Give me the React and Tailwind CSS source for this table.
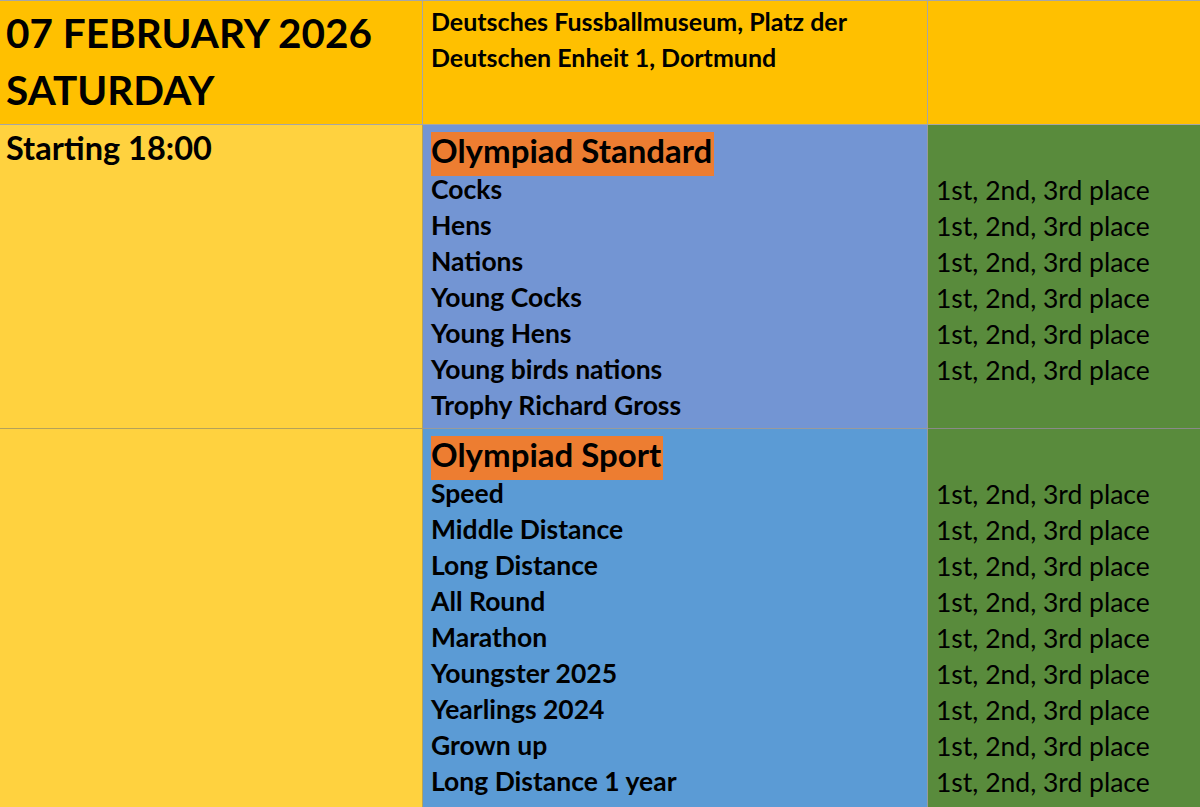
const standard = [
  "Cocks",
  "Hens",
  "Nations",
  "Young Cocks",
  "Young Hens",
  "Young birds nations",
  "Trophy Richard Gross",
];

const sport = [
  "Speed",
  "Middle Distance",
  "Long Distance",
  "All Round",
  "Marathon",
  "Youngster 2025",
  "Yearlings 2024",
  "Grown up",
  "Long Distance 1 year",
];

const Section = ({ label, title, items, prizes, blue, last }) => (
  <>
    <div
      className={`bg-[#ffd23f] border-r border-[#b4a25a] pl-[6px] pt-[3px] text-[32.5px] font-bold leading-[40px] text-black ${last ? "" : "border-b"}`}
    >
      {label}
    </div>
    <div
      className={`${blue} border-r border-[#9a9a9a] pt-[7px] pl-[8px] ${last ? "" : "border-b"}`}
    >
      <div className="h-[40px]">
        <span className="inline-block h-[44px] bg-[#ed7d31] pr-[2px] pb-[8px] text-[33px] font-bold leading-[36px] text-black">
          {title}
        </span>
      </div>
      {items.map((item) => (
        <div key={item} className="h-[36px] text-[26.5px] font-bold leading-[34px] text-black">
          {item}
        </div>
      ))}
    </div>
    <div
      className={`bg-[#598b3c] pt-[47px] pl-[8px] border-[#8a8a8a] ${last ? "" : "border-b"}`}
    >
      {Array.from({ length: prizes }).map((_, i) => (
        <div key={i} className="h-[36px] text-[26.5px] leading-[37px] text-black">
          1st, 2nd, 3rd place
        </div>
      ))}
    </div>
  </>
);

export default function App() {
  return (
    <div className="h-[807px] w-[1200px] overflow-hidden bg-white font-['Lato',sans-serif]">
      <div className="grid grid-cols-[423px_505px_272px] grid-rows-[124px_304px_379px] border-t border-[#a6a6a6]">
        {/* Header */}
        <div className="bg-[#ffc000] border-r border-b border-[#a6a6a6] pl-[6px] pt-[3px] text-[40.5px] font-bold leading-[57px] text-black">
          <div>07 FEBRUARY 2026</div>
          <div>SATURDAY</div>
        </div>
        <div className="bg-[#ffc000] border-r border-b border-[#a6a6a6] pl-[8px] pt-[2px] text-[25px] font-bold leading-[36px] text-black">
          <div>Deutsches Fussballmuseum, Platz der</div>
          <div>Deutschen Enheit 1, Dortmund</div>
        </div>
        <div className="bg-[#ffc000] border-b border-[#a6a6a6]"></div>

        {/* Olympiad Standard */}
        <Section
          label="Starting 18:00"
          title="Olympiad Standard"
          items={standard}
          prizes={6}
          blue="bg-[#7395d3]"
        />
        {/* Olympiad Sport */}
        <Section title="Olympiad Sport" items={sport} prizes={9} blue="bg-[#5b9bd5]" last />
      </div>
    </div>
  );
}
